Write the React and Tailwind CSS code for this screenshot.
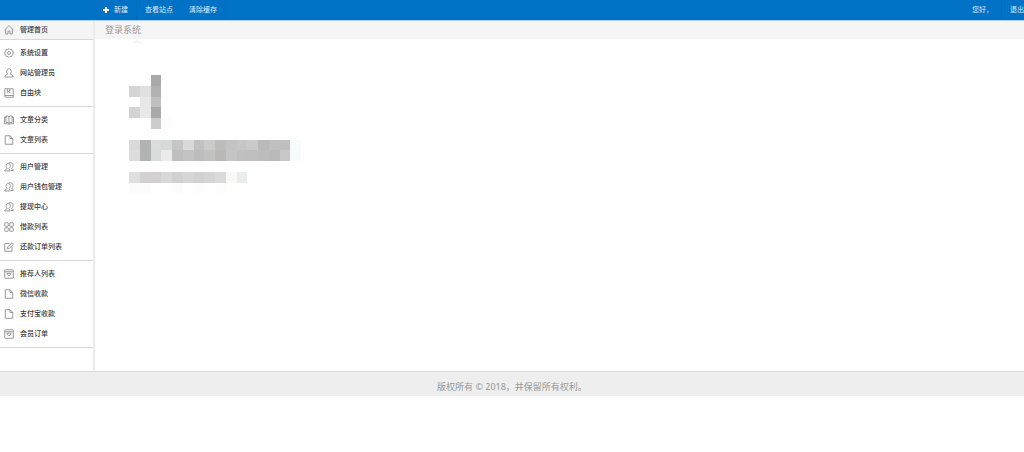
import clsx from "clsx";

const icons = {
  home: (
    <>
      <path d="M1 10 9.2 2a1.200 1.200 0 0 1 1.600 0L19 10" />
      <path d="M3.500 8.500V18H8v-4.500a2 2 0 0 1 4 0V18h4.500V8.500" />
    </>
  ),
  gear: (
    <>
      <path d="M10 1l2.200 2.200 3.200-.6.600 3.200L19 7.600 17.600 10l1.400 2.400-3 1.800-.6 3.200-3.200-.6L10 19l-2.200-2.200-3.200.6-.6-3.200-3-1.800L2.400 10 1 7.600l3-1.800.6-3.200 3.200.6z" strokeLinejoin="round" />
      <circle cx="10" cy="10" r="3" />
    </>
  ),
  user: (
    <path d="M7.500 12C4.500 9 5 1.500 10 1.500s5.500 7.500 2.500 10.500c0 1.500 6 1.500 6 6h-17c0-4.500 6-4.500 6-6z" />
  ),
  block: (
    <>
      <path d="M1.500 1.500h17v17h-15a2 2 0 0 1-2-2z" />
      <path d="M1.500 15h17M6.500 2v7L9 7l2.500 2V2" />
    </>
  ),
  book: (
    <>
      <path d="M4 2h3l3 1.500L13 2h3v13h-3l-3 1.500L7 15H4zM10 3.500v13" />
      <path d="M4 4H1v13.500h6l3 1 3-1h6V4h-3" />
    </>
  ),
  file: (
    <>
      <path d="M2.500 1.500H12l5.500 5.500v11.500h-15z" />
      <path d="M12 1.500V7h5.500" />
    </>
  ),
  users: (
    <>
      <path d="M9.500 13.500c4.500-2.500 4-11-1-11s-5.500 8.500-2 11c-1.500 1-5 1-5 4.500h11c0-3-2-3.500-3-4.500z" />
      <path d="M9.500 2.500c4-2.500 9-.5 8.500 5 0 2.500-1 4-2.500 5 .5 1.500 3 1.500 3 4.500h-4.500" />
    </>
  ),
  grid: (
    <>
      <rect x="1.500" y="1.500" width="7" height="7" rx="1" />
      <rect x="11.500" y="1.500" width="7" height="7" rx="1" />
      <rect x="1.500" y="11.500" width="7" height="7" rx="1" />
      <rect x="11.500" y="11.500" width="7" height="7" rx="1" />
    </>
  ),
  edit: (
    <>
      <path d="M11 3H1.500v15.500H16V10" />
      <path d="m6.500 13.500 1-4L16 1.500l3 3-8.500 8z" />
    </>
  ),
  order: (
    <>
      <rect x="1.500" y="1.500" width="17" height="17" rx="1" />
      <path d="M1.500 5.500h17M6 8.500c0 6 8 6 8 0z" />
    </>
  ),
};

const groups = [
  [
    ["gear", "系统设置"],
    ["user", "网站管理员"],
    ["block", "自由块"],
  ],
  [
    ["book", "文章分类"],
    ["file", "文章列表"],
  ],
  [
    ["users", "用户管理"],
    ["users", "用户钱包管理"],
    ["users", "提现中心"],
    ["grid", "借款列表"],
    ["edit", "还款订单列表"],
  ],
  [
    ["order", "推荐人列表"],
    ["file", "微信收款"],
    ["file", "支付宝收款"],
    ["order", "会员订单"],
  ],
];

// one list per row of the mosaic, "" is an empty cell
const mosaic = [
  { y: 0, cells: ["", "", "#a9a9a9"] },
  { y: 1, cells: ["#d4d4d4", "#e0e0e0", "#b1b1b1"] },
  { y: 2, cells: ["", "#e8e8e8", "#c0c0c0"] },
  { y: 3, cells: ["#d3d3d3", "#e8e8e8", "#a9a9a9"] },
  { y: 4, cells: ["", "", "#cbcbcb", "#fcfcfc"] },
  { y: 6, cells: ["#d9d9d9", "#b2b2b2", "#dbdcdc", "#d6dad9", "#c6c6c6", "#d9d9d9", "#c1c1c1", "#cbcbcb", "#bcbcbc", "#c3c3c3", "#c6c6c6", "#cacaca", "#b9b9b9", "#c0c0c0", "#bfbfbf", "#f6fafb"] },
  { y: 7, cells: ["#dcdcdc", "#b2b2b2", "#dadbdb", "#ebebeb", "#bfbfbf", "#c3c3c3", "#bcbcbc", "#c2c2c2", "#bbb8b7", "#c5c5c5", "#c0c0c0", "#bfbfbf", "#bdbdbd", "#bababa", "#c8c8c8", "#f8fbfc"] },
  { y: 9, cells: ["#dfdfdf", "#d3d1d2", "#d2d0d1", "#d8d8d8", "#d2d0d1", "#d6d6d6", "#d1d1d1", "#d5d5d5", "#dadada", "#f8f8f7", "#e9eded"] },
  { y: 10, cells: ["#fcfcfc", "#fcfcfc", "", "", "#fcfcfc", "", "#fcfcfc", "", "#fdfdfd"] },
];

function Icon({ name }) {
  return (
    <svg viewBox="0 0 20 20" className="size-[10px] shrink-0" fill="none" stroke="#808080" strokeWidth="1.6" aria-hidden="true">
      {icons[name]}
    </svg>
  );
}

function MenuItem({ icon, label, active }) {
  return (
    <a
      href="#"
      className={clsx(
        "flex items-center gap-1.5 pl-1 text-[7px] font-medium text-[#3c3c3c]",
        active ? "h-[19px] border-b border-[#d8d8d8] bg-[#f5f5f5]" : "h-5"
      )}
    >
      <Icon name={icon} />
      {label}
    </a>
  );
}

function Mosaic() {
  return (
    <svg viewBox="0 0 172 118" className="w-[172px]" shapeRendering="crispEdges" aria-hidden="true">
      {mosaic.map((row) =>
        row.cells.map((color, i) =>
          color ? <rect key={row.y + "-" + i} x={i * 10.75} y={row.y * 10.75} width="10.75" height="10.75" fill={color} /> : null
        )
      )}
    </svg>
  );
}

export default function App() {
  return (
    <div lang="zh-CN" className="bg-white font-['Noto_Sans','Noto_Sans_CJK_SC',sans-serif]">
      <header className="flex h-[21px] items-stretch justify-between overflow-hidden border-b border-[#a9cfeb] bg-[#0072c6] text-[7px] text-[#d9ecfa]">
        <nav className="flex pl-[94px]">
          <a href="#" className="flex items-center gap-1 border-r border-[#006abb] px-2">
            <svg viewBox="0 0 8 8" className="size-2" fill="#fff" aria-hidden="true">
              <path d="M3 1h2v2h2v2H5v2H3V5H1V3h2z" />
            </svg>
            新建
          </a>
          <a href="#" className="flex items-center px-2">查看站点</a>
          <a href="#" className="flex items-center border-r border-[#006abb] px-2">清除缓存</a>
        </nav>
        <div className="flex">
          <span className="flex items-center border-r border-[#006abb] px-2">您好，</span>
          <a href="#" className="flex items-center pl-2">退出</a>
        </div>
      </header>

      <div className="flex">
        <aside className="w-[95px] shrink-0 border-r-2 border-[#ebebeb] pb-[23px]">
          <MenuItem icon="home" label="管理首页" active />
          {groups.map((items, i) => (
            <nav key={i} className="border-b border-[#d8d8d8] py-[3px]">
              {items.map(([icon, label]) => (
                <MenuItem key={label} icon={icon} label={label} />
              ))}
            </nav>
          ))}
        </aside>
        <main className="min-w-0 flex-1">
          <h1 className="flex h-[18px] items-center bg-[#f5f5f5] pl-[10px] text-[9px] text-[#999]">登录系统</h1>
          <div className="pl-[34px]">
            <svg viewBox="0 0 16 36" className="h-9 w-4" fill="#f5f5f5" aria-hidden="true">
              <path d="M3 4 8 0l5 4z" />
            </svg>
            <Mosaic />
          </div>
        </main>
      </div>

      <footer className="flex h-[25px] items-center justify-center border-t border-[#d8d8d8] bg-[#eee] pt-1.5 text-[9px] text-[#999]">
        版权所有 © 2018，并保留所有权利。
      </footer>
    </div>
  );
}
